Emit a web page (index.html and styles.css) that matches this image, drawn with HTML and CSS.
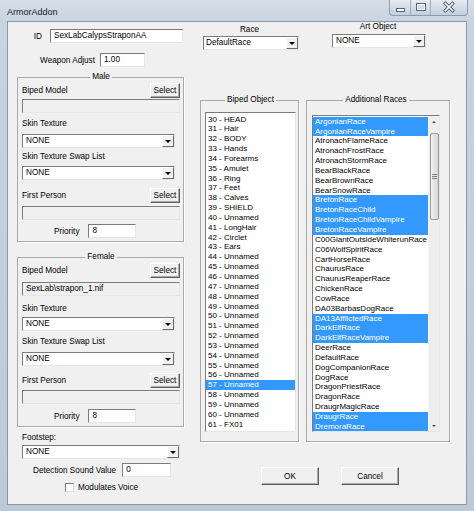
FILE: index.html
```html
<!DOCTYPE html>
<html>
<head>
<meta charset="utf-8">
<title>ArmorAddon</title>
<link rel="stylesheet" href="styles.css">
</head>
<body>
<div class="window">
  <div class="titlebar">
    <span class="title">ArmorAddon</span>
    <div class="caption">
      <span class="cbtn cmin"><svg width="21" height="15" viewBox="0 0 21 15"><rect x="6.5" y="8.5" width="8" height="3" fill="#fff" stroke="#55677a"/></svg></span>
      <span class="cbtn cmax"><svg width="20" height="15" viewBox="0 0 20 15"><rect x="5.5" y="3.5" width="9" height="7" fill="none" stroke="#55677a"/><rect x="6.5" y="4.5" width="7" height="5" fill="none" stroke="#fff"/></svg></span>
      <span class="cbtn cclose"><svg width="36" height="15" viewBox="0 0 36 15"><path d="M14.5 3.5 L21.5 10.5 M21.5 3.5 L14.5 10.5" stroke="#55677a" stroke-width="3.6" stroke-linecap="square"/><path d="M14.5 3.5 L21.5 10.5 M21.5 3.5 L14.5 10.5" stroke="#fff" stroke-width="1.6" stroke-linecap="square"/></svg></span>
    </div>
  </div>
  <div class="client">
    <div class="col-left">
      <div class="row-id"><span>ID</span><span class="edit id-edit">SexLabCalypsStraponAA</span></div>
      <div class="row-weapon"><span>Weapon Adjust</span><span class="edit weapon-edit">1.00</span></div>

      <fieldset class="group side-group male-group">
        <legend>Male</legend>
        <div class="btn-row"><span>Biped Model</span><span class="btn select-btn">Select</span></div>
        <div class="static mt1"></div>
        <div class="lbl mt6">Skin Texture</div>
        <div class="combo skin-combo mt5"><span class="combo-text">NONE</span><span class="drop"></span></div>
        <div class="lbl mt4">Skin Texture Swap List</div>
        <div class="combo skin-combo mt4"><span class="combo-text">NONE</span><span class="drop"></span></div>
        <div class="btn-row mt8"><span>First Person</span><span class="btn select-btn">Select</span></div>
        <div class="static mt3"></div>
        <div class="priority-row mt4"><span>Priority</span><span class="edit priority-edit">8</span></div>
      </fieldset>

      <fieldset class="group side-group female-group">
        <legend>Female</legend>
        <div class="btn-row"><span>Biped Model</span><span class="btn select-btn">Select</span></div>
        <div class="static mt4"><span class="static-text">SexLab\strapon_1.nif</span></div>
        <div class="lbl mt8">Skin Texture</div>
        <div class="combo skin-combo mt3"><span class="combo-text">NONE</span><span class="drop"></span></div>
        <div class="lbl mt6">Skin Texture Swap List</div>
        <div class="combo skin-combo mt5"><span class="combo-text">NONE</span><span class="drop"></span></div>
        <div class="btn-row mt7"><span>First Person</span><span class="btn select-btn">Select</span></div>
        <div class="static mt2"></div>
        <div class="priority-row mt5"><span>Priority</span><span class="edit priority-edit">8</span></div>
      </fieldset>

      <div class="lbl footstep-lbl">Footstep:</div>
      <div class="combo footstep-combo"><span class="combo-text">NONE</span><span class="drop"></span></div>
      <div class="detect-row"><span>Detection Sound Value</span><span class="edit detect-edit">0</span></div>
      <div class="check-row"><span class="checkbox"></span><span>Modulates Voice</span></div>
    </div>

    <div class="col-right">
      <div class="top-grid">
        <div class="race-head">
          <div class="lbl center">Race</div>
          <div class="combo race-combo"><span class="combo-text tight">DefaultRace</span><span class="drop"></span></div>
        </div>
        <div class="art-head">
          <div class="lbl center">Art Object</div>
          <div class="combo art-combo"><span class="combo-text">NONE</span><span class="drop"></span></div>
        </div>

        <fieldset class="group biped-group">
          <legend>Biped Object</legend>
          <div class="listbox biped-list">
            <div class="item">30 - HEAD</div>
            <div class="item">31 - Hair</div>
            <div class="item">32 - BODY</div>
            <div class="item">33 - Hands</div>
            <div class="item">34 - Forearms</div>
            <div class="item">35 - Amulet</div>
            <div class="item">36 - Ring</div>
            <div class="item">37 - Feet</div>
            <div class="item">38 - Calves</div>
            <div class="item">39 - SHIELD</div>
            <div class="item">40 - Unnamed</div>
            <div class="item">41 - LongHair</div>
            <div class="item">42 - Circlet</div>
            <div class="item">43 - Ears</div>
            <div class="item">44 - Unnamed</div>
            <div class="item">45 - Unnamed</div>
            <div class="item">46 - Unnamed</div>
            <div class="item">47 - Unnamed</div>
            <div class="item">48 - Unnamed</div>
            <div class="item">49 - Unnamed</div>
            <div class="item">50 - Unnamed</div>
            <div class="item">51 - Unnamed</div>
            <div class="item">52 - Unnamed</div>
            <div class="item">53 - Unnamed</div>
            <div class="item">54 - Unnamed</div>
            <div class="item">55 - Unnamed</div>
            <div class="item">56 - Unnamed</div>
            <div class="item sel">57 - Unnamed</div>
            <div class="item">58 - Unnamed</div>
            <div class="item">59 - Unnamed</div>
            <div class="item">60 - Unnamed</div>
            <div class="item">61 - FX01</div>
          </div>
        </fieldset>

        <fieldset class="group races-group">
          <legend>Additional Races</legend>
          <div class="listbox races-list">
            <div class="items">
              <div class="item sel">ArgonianRace</div>
              <div class="item sel">ArgonianRaceVampire</div>
              <div class="item">AtronachFlameRace</div>
              <div class="item">AtronachFrostRace</div>
              <div class="item">AtronachStormRace</div>
              <div class="item">BearBlackRace</div>
              <div class="item">BearBrownRace</div>
              <div class="item">BearSnowRace</div>
              <div class="item sel">BretonRace</div>
              <div class="item sel">BretonRaceChild</div>
              <div class="item sel">BretonRaceChildVampire</div>
              <div class="item sel">BretonRaceVampire</div>
              <div class="item">C00GiantOutsideWhiterunRace</div>
              <div class="item">C06WolfSpiritRace</div>
              <div class="item">CartHorseRace</div>
              <div class="item">ChaurusRace</div>
              <div class="item">ChaurusReaperRace</div>
              <div class="item">ChickenRace</div>
              <div class="item">CowRace</div>
              <div class="item">DA03BarbasDogRace</div>
              <div class="item sel">DA13AfflictedRace</div>
              <div class="item sel">DarkElfRace</div>
              <div class="item sel">DarkElfRaceVampire</div>
              <div class="item">DeerRace</div>
              <div class="item">DefaultRace</div>
              <div class="item">DogCompanionRace</div>
              <div class="item">DogRace</div>
              <div class="item">DragonPriestRace</div>
              <div class="item">DragonRace</div>
              <div class="item">DraugrMagicRace</div>
              <div class="item sel">DraugrRace</div>
              <div class="item sel">DremoraRace</div>
            </div>
            <div class="scrollbar">
              <span class="sb-arrow up"></span>
              <div class="sb-track">
                <div class="sb-thumb"><span class="grip"></span></div>
              </div>
              <span class="sb-arrow down"></span>
            </div>
          </div>
        </fieldset>
      </div>

      <div class="button-row">
        <span class="btn dlg-btn">OK</span>
        <span class="btn dlg-btn">Cancel</span>
      </div>
    </div>
  </div>
</div>
</body>
</html>
```

FILE: styles.css
```css
* { box-sizing: border-box; }
html, body { margin: 0; padding: 0; }
body {
  width: 474px;
  height: 511px;
  overflow: hidden;
  font-family: "Liberation Sans", Arial, sans-serif;
  font-size: 8.2px;
  color: #000;
  background: #bfcddb;
}
.window {
  width: 474px;
  height: 511px;
  padding: 0 7px 6px 7px;
  display: flex;
  flex-direction: column;
  background: linear-gradient(180deg, #d6dfe8 0, #c7d3df 22px, #bccad8 100%);
}
.titlebar {
  height: 21px;
  flex-shrink: 0;
  display: flex;
  justify-content: space-between;
  align-items: flex-start;
}
.title {
  font-size: 9px;
  line-height: 12px;
  padding-top: 6px;
  color: #1a1a1a;
}
.caption {
  display: flex;
  height: 16px;
  margin-right: -1px;
  border: 1px solid #8d9cad;
  border-top: none;
  border-radius: 0 0 4px 4px;
  overflow: hidden;
  background: linear-gradient(180deg, #e6ecf2 0, #d3dde7 50%, #c3cfdc 100%);
}
.cbtn { display: block; height: 15px; }
.cbtn svg { display: block; }
.cmin { width: 21px; border-right: 1px solid #9eacbb; }
.cmax { width: 20px; border-right: 1px solid #9eacbb; }
.cclose { width: 36px; }

.client {
  height: 484px;
  background: #f0f0f0;
  border: 1px solid #8a98a8;
  display: flex;
  padding-left: 9px;
}

/* ---------- common controls ---------- */
.edit, .combo, .static, .listbox {
  background: #fff;
  border-style: solid;
  border-width: 1px;
  border-color: #7c7c7c #e6e6e6 #e6e6e6 #7c7c7c;
}
.edit {
  display: block;
  height: 14px;
  line-height: 12px;
  padding-left: 3px;
  white-space: nowrap;
  overflow: hidden;
}
.static {
  height: 14px;
  width: 158px;
  background: #f0f0f0;
  line-height: 12px;
  padding-left: 3px;
  white-space: nowrap;
}
.combo {
  display: flex;
  height: 14px;
}
.combo-text {
  flex: 1;
  line-height: 12px;
  padding-left: 3px;
  white-space: nowrap;
  overflow: hidden;
}
.combo-text.tight { padding-left: 2px; }
.drop {
  width: 12px;
  height: 12px;
  background: #f0f0f0;
  border-style: solid;
  border-width: 1px;
  border-color: #fff #6a6a6a #6a6a6a #fff;
  display: flex;
  align-items: center;
  justify-content: center;
}
.drop::after {
  content: "";
  display: block;
  margin-top: 1px;
  border-left: 3px solid transparent;
  border-right: 3px solid transparent;
  border-top: 3px solid #000;
}
.btn {
  display: flex;
  align-items: center;
  justify-content: center;
  background: #f0f0f0;
  border-style: solid;
  border-width: 1px;
  border-color: #fff #5e5e5e #5e5e5e #fff;
  box-shadow: inset -1px -1px 0 #a8a8a8;
  white-space: nowrap;
}
.select-btn { width: 30px; height: 15px; }
.lbl { height: 10px; line-height: 10px; white-space: nowrap; }
.lbl.center { text-align: center; }

.mt1 { margin-top: 1px; }
.mt2 { margin-top: 2px; }
.mt3 { margin-top: 3px; }
.mt4 { margin-top: 4px; }
.mt5 { margin-top: 5px; }
.mt6 { margin-top: 6px; }
.mt7 { margin-top: 7px; }
.mt8 { margin-top: 8px; }

/* ---------- group boxes ---------- */
.group {
  margin: 0;
  min-width: 0;
  border: 1px solid #a9a9a9;
  box-shadow: 1px 1px 0 #fff;
}
.group legend {
  margin: 0 auto;
  padding: 0 2px;
  line-height: 10px;
  height: 10px;
}

/* ---------- left column ---------- */
.col-left {
  width: 167px;
  flex-shrink: 0;
  display: flex;
  flex-direction: column;
}
.row-id {
  margin-top: 7px;
  height: 14px;
  display: flex;
  justify-content: flex-end;
  align-items: center;
  gap: 8px;
  padding-right: 1px;
}
.id-edit { width: 133px; }
.row-weapon {
  margin-top: 10px;
  height: 14px;
  display: flex;
  justify-content: flex-end;
  align-items: center;
  gap: 5px;
  padding-right: 39px;
}
.weapon-edit { width: 45px; }

.side-group {
  width: 167px;
  padding: 1px 3px 3px 4px;
}
.male-group { margin-top: 5px; }
.female-group { margin-top: 10px; }
.btn-row {
  height: 15px;
  display: flex;
  justify-content: space-between;
  align-items: center;
}
.skin-combo { width: 153px; }
.priority-row {
  height: 14px;
  display: flex;
  align-items: center;
  gap: 9px;
  padding-left: 32px;
}
.priority-edit { width: 48px; }

.footstep-lbl { margin-top: 6px; margin-left: 5px; }
.footstep-combo { margin-top: 2px; margin-left: 5px; width: 158px; }
.detect-row {
  margin-top: 4px;
  height: 14px;
  display: flex;
  align-items: center;
  gap: 6px;
  padding-left: 16px;
}
.detect-edit { width: 49px; }
.check-row {
  margin-top: 6px;
  height: 9px;
  display: flex;
  align-items: center;
  gap: 4px;
  padding-left: 48px;
}
.checkbox {
  width: 9px;
  height: 9px;
  background: #fff;
  border-style: solid;
  border-width: 1px;
  border-color: #7a7a7a #dcdcdc #dcdcdc #7a7a7a;
}

/* ---------- right side ---------- */
.col-right {
  margin-left: 16px;
  width: 250px;
  display: flex;
  flex-direction: column;
}
.top-grid {
  display: grid;
  grid-template-columns: 99px 144px;
  grid-template-rows: 28px auto;
  column-gap: 7px;
  row-gap: 45px;
}
.race-head .lbl { margin-top: 3px; }
.race-combo { margin-top: 1px; margin-left: 3px; width: 96px; }
.art-combo { margin-top: 2px; margin-left: 26px; width: 94px; }

.biped-group { padding: 7px 2px 9px 4px; }
.races-group { padding: 10px 9px 9px 5px; }

.listbox { overflow: hidden; }
.item {
  height: 9.85px;
  line-height: 9.85px;
  padding-left: 2px;
  font-size: 8px;
  white-space: nowrap;
}
.item.sel { background: #3399ff; color: #fff; }
.biped-list { height: 320px; padding-top: 1.5px; }
.races-list { height: 317px; display: flex; }
.races-list .items { flex: 1; min-width: 0; overflow: hidden; padding-top: 0.7px; }

.scrollbar {
  width: 11px;
  flex-shrink: 0;
  display: flex;
  flex-direction: column;
  background: #eeeeee;
  border-left: 1px solid #f6f6f6;
}
.sb-arrow {
  height: 11px;
  flex-shrink: 0;
  display: flex;
  align-items: center;
  justify-content: center;
}
.sb-arrow::after {
  content: "";
  display: block;
  border-left: 2px solid transparent;
  border-right: 2px solid transparent;
}
.sb-arrow.up::after { border-bottom: 2px solid #4a4a4a; }
.sb-arrow.down::after { border-top: 2px solid #4a4a4a; }
.sb-track { flex: 1; padding-top: 6px; }
.sb-thumb {
  height: 87px;
  margin: 0 0 0 1px;
  width: 9px;
  border: 1px solid #9a9a9a;
  border-radius: 2px;
  background: linear-gradient(90deg, #f2f2f2 0, #e4e4e4 50%, #d6d6d6 100%);
  display: flex;
  align-items: center;
  justify-content: center;
}
.grip {
  width: 5px;
  height: 5px;
  border-top: 1px solid #7f7f7f;
  border-bottom: 1px solid #7f7f7f;
  background: linear-gradient(180deg, transparent 1px, #7f7f7f 1px, #7f7f7f 2px, transparent 2px);
}

.button-row {
  margin-top: 25px;
  display: flex;
  gap: 22px;
  padding-left: 61px;
}
.dlg-btn { width: 58px; height: 18px; }
```
